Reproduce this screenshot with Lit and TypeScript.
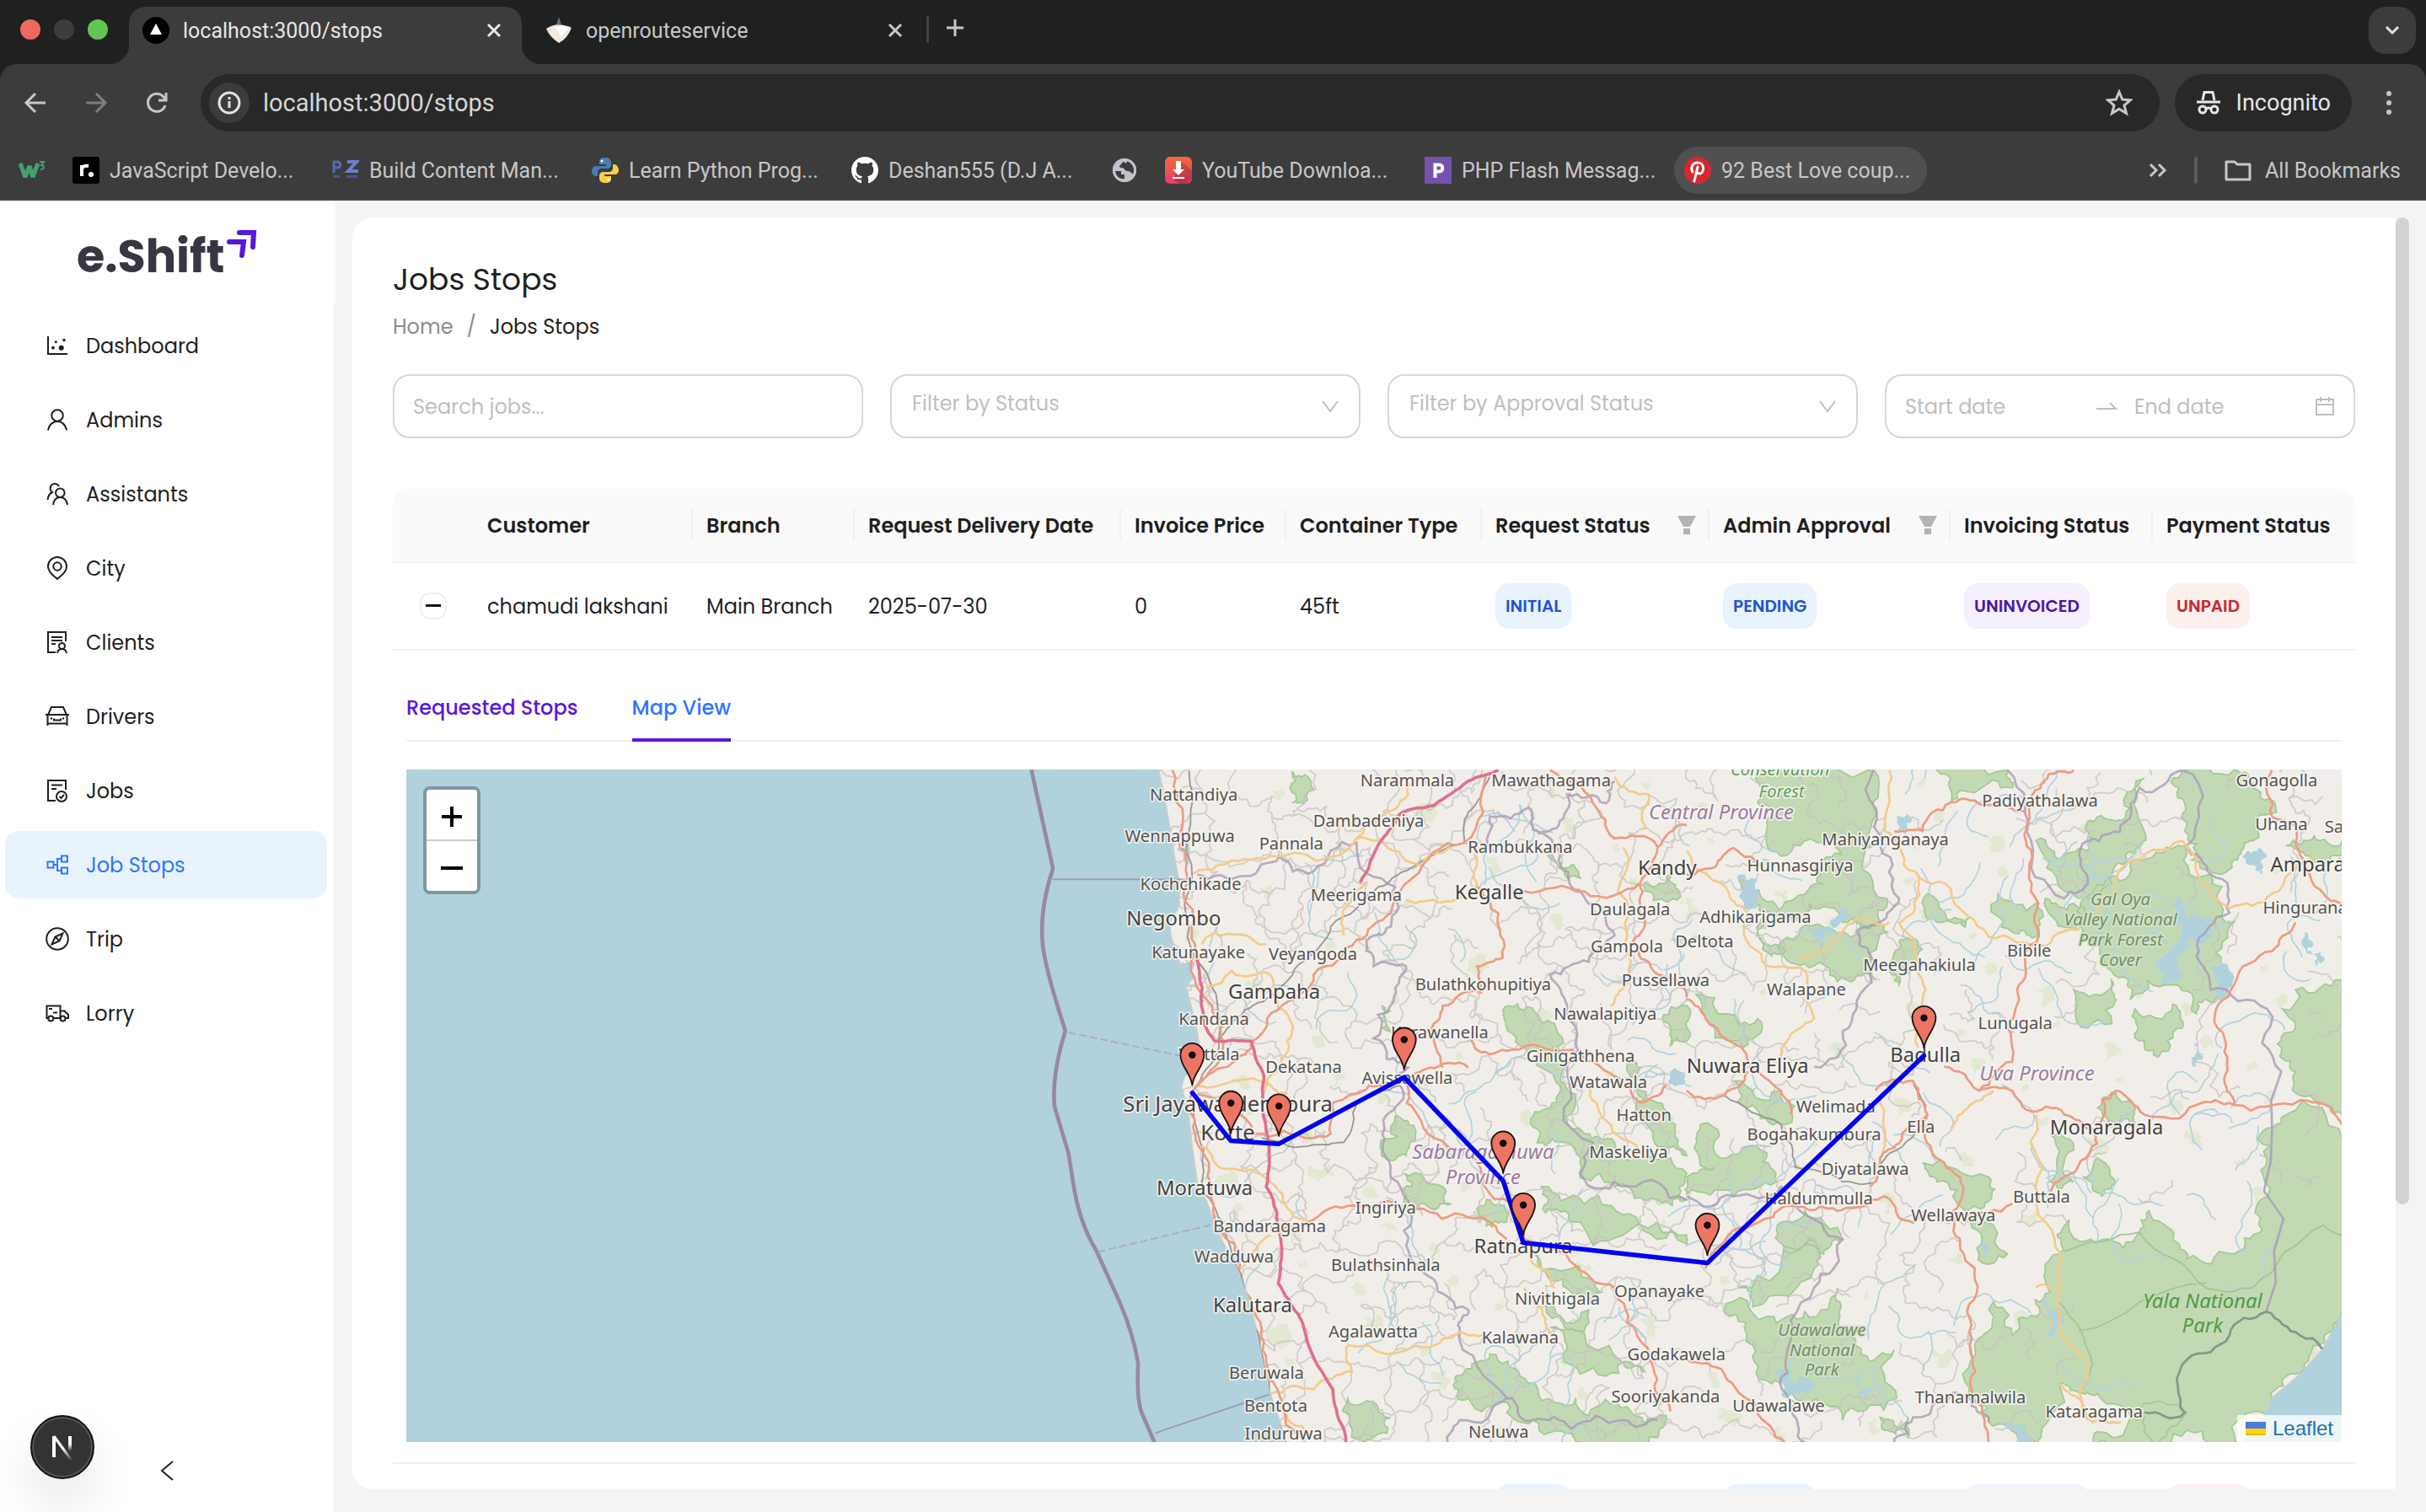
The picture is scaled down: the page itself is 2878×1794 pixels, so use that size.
import { LitElement, html, svg, css } from "lit";
import { customElement, state } from "lit/decorators.js";
import { classMap } from "lit/directives/class-map.js";

type Pt = [number, number];

/* ---------- map geometry helpers ---------- */

const west = (n: number[]): Pt[] => pairs(n).map(([x, y]) => [653.8 + x * 0.278, 490.3 + y * 0.2849] as Pt);
const east = (n: number[]): Pt[] => pairs(n).map(([x, y]) => [1089.6 + x * 0.30505, 490.3 + y * 0.3106] as Pt);

function pairs(n: number[]): Pt[] {
  const out: Pt[] = [];
  for (let i = 0; i < n.length; i += 2) out.push([n[i], n[i + 1]]);
  return out;
}

function random(seed: number) {
  let s = seed * 7919 + 17;
  return () => {
    s = (s * 16807) % 2147483647;
    return s / 2147483647;
  };
}

/* Midpoint displacement: gives straight outlines a natural, uneven edge. */
function rough(points: Pt[], amount: number, seed: number, closed = false): string {
  const rnd = random(seed + 3);
  let pts = closed ? [...points, points[0]] : points;
  for (let level = 0; level < 3; level++) {
    const next: Pt[] = [pts[0]];
    for (let i = 1; i < pts.length; i++) {
      const [ax, ay] = pts[i - 1];
      const [bx, by] = pts[i];
      const len = Math.hypot(bx - ax, by - ay) || 1;
      if (len > 2.5) {
        const d = (rnd() - 0.5) * len * amount;
        next.push([(ax + bx) / 2 - ((by - ay) / len) * d, (ay + by) / 2 + ((bx - ax) / len) * d]);
      }
      next.push(pts[i]);
    }
    pts = next;
  }
  return "M" + pts.map(([x, y]) => `${x.toFixed(1)} ${y.toFixed(1)}`).join("L") + (closed ? "Z" : "");
}

function wander(seed: number, count: number, steps: number, step: number): string {
  const rnd = random(seed);
  let d = "";
  for (let i = 0; i < count; i++) {
    let x = 750 + rnd() * 764;
    let y = 497 + rnd() * 435;
    if (x > 1370 && y > 800) continue;
    let a = rnd() * 6.28;
    d += `M${x.toFixed(1)} ${y.toFixed(1)}`;
    const n = steps / 2 + rnd() * steps;
    for (let k = 0; k < n; k++) {
      a += (rnd() - 0.5) * 1.5;
      x += Math.cos(a) * step;
      y += Math.sin(a) * step;
      d += `L${x.toFixed(1)} ${y.toFixed(1)}`;
    }
  }
  return d;
}

/* Lanes join neighbouring points of a jittered lattice, so they meet at junctions. */
function lanes(): string {
  const rnd = random(41);
  const cols = 40, rows = 23, grid: Pt[][] = [];
  for (let r = 0; r <= rows; r++) {
    grid.push([]);
    for (let c = 0; c <= cols; c++) grid[r].push([745 + c * 19.5 + (rnd() - 0.5) * 18, 495 + r * 19.5 + (rnd() - 0.5) * 18]);
  }
  let d = "";
  for (let r = 0; r < rows; r++)
    for (let c = 0; c < cols; c++) {
      const keep = c < 18 ? 0.62 : c < 26 ? 0.4 : 0.14;
      if (c > 30 && r > 14) continue;
      if (rnd() < keep) d += rough([grid[r][c], grid[r][c + 1]], 0.7, r * 50 + c);
      if (rnd() < keep) d += rough([grid[r][c], grid[r + 1][c]], 0.7, r * 60 + c + 9);
    }
  return d;
}

const coast = west([340,25,350,70,365,150,378,230,390,290,385,340,365,370,368,400,385,450,410,540,430,620,440,690,400,720,392,745,408,790,418,880,430,960,450,1000,480,1080,520,1150,552,1230,575,1330,590,1400,600,1440,620,1500,635,1568]);
const southEast = east([1160,1440,1220,1372,1240,1330,1300,1280,1350,1225,1389,1150]);
const landPath = "M" + [...coast, ...southEast, [1520, 490] as Pt, [740, 490] as Pt].map((p) => p.map((v) => v.toFixed(1)).join(" ")).join("L") + "Z";

const forests: Pt[][] = [
  west([1140,570,1210,565,1260,600,1290,690,1310,760,1330,850,1400,870,1480,900,1568,940,1568,1000,1500,1000,1400,970,1320,950,1290,870,1220,870,1215,800,1270,760,1230,700,1180,650,1150,610]),
  west([1110,1350,1180,1400,1260,1460,1340,1490,1430,1470,1520,1490,1500,1540,1440,1568,1300,1530,1210,1500,1150,1460,1060,1450,1025,1420,1050,1390]),
  west([890,810,920,830,915,900,880,910,855,880]),
  west([910,940,1000,970,1020,1010,960,1010,910,1000]),
  west([1250,1290,1420,1370,1470,1390,1380,1400,1280,1350]),
  west([780,1450,850,1470,870,1530,820,1550]),
  west([1210,1120,1350,1180,1370,1210,1280,1180]),
  west([1230,970,1330,1010,1450,1040,1568,1080,1568,1100,1420,1080,1300,1050,1240,1030]),
  west([650,30,680,35,675,100,650,100]),
  west([1470,280,1530,260,1550,300,1490,320]),
  west([1250,210,1300,240,1320,270,1290,270]),
  west([860,560,880,570,880,620,862,610]),
  west([1240,1240,1340,1250,1340,1280,1280,1280]),
  west([1080,1020,1130,1010,1150,1050,1100,1060]),
  west([1430,690,1460,700,1500,780,1540,840,1568,900,1500,880,1450,800]),
  west([1510,590,1568,560,1568,640,1530,650]),
  east([150,23,385,23,395,100,400,180,425,290,405,345,330,340,260,300,180,320,130,290,110,250,160,290,230,290,290,260,280,230,330,200,250,170,170,180,180,120,150,90]),
  east([200,380,290,350,400,340,425,360,400,460,340,460,270,430,200,400]),
  east([530,23,680,23,690,60,610,70,560,90]),
  east([1050,23,1160,23,1200,60,1250,110,1200,170,1170,200,1130,240,1070,210,1055,150,1040,80]),
  east([950,210,1040,180,1110,240,1130,300,1135,380,1150,470,1100,500,1080,530,1030,470,940,500,900,440,870,380,840,330,860,280,930,250]),
  east([740,170,800,200,850,190,850,150,870,120,930,120,950,60,970,40,970,150,930,200,900,260,830,290,780,240]),
  east([1290,480,1389,460,1389,740,1340,720,1290,650,1260,610,1290,560]),
  east([1270,180,1330,160,1389,170,1389,200,1310,200]),
  east([660,280,740,300,740,370,690,360]),
  east([760,290,820,300,840,340,810,350]),
  east([820,480,900,460,910,500,850,560]),
  east([950,520,1030,510,1050,560,1000,620,950,580]),
  east([810,960,880,1000,960,985,980,940,1030,1000,1060,1040,1160,1030,1220,980,1225,880,1210,790,1270,740,1389,790,1389,1150,1340,1220,1290,1280,1240,1330,1180,1370,1110,1425,1010,1425,970,1370,870,1320,840,1320,790,1300,740,1425,700,1425,640,1380,610,1340,610,1220,640,1190,650,1130,690,1200,740,1160,770,1110,790,1030,785,990]),
  east([80,1150,170,1160,250,1150,320,1100,325,1160,370,1240,440,1230,445,1330,380,1355,290,1340,230,1330,180,1300,140,1220]),
  east([30,760,70,830,170,820,190,880,100,910,0,905,0,870,60,850,20,800]),
  east([20,490,80,530,150,540,120,600,60,580]),
  east([450,380,490,380,490,440,450,470,430,430]),
  east([870,830,900,870,880,910,840,870]),
  east([770,780,820,800,820,880,770,880]),
  east([880,710,910,695,950,730,950,760,890,770]),
  east([500,840,640,870,640,920,590,940,530,880]),
  east([590,960,650,970,680,1030,620,1030]),
  east([190,980,250,940,330,1000,290,1030,220,1030]),
  east([110,1100,260,1000,270,1060,140,1140]),
  east([510,280,600,330,590,350,540,340]),
  east([870,1400,970,1340,1060,1360,1000,1425,860,1425]),
  east([100,670,200,690,210,760,150,730]),
  east([410,1370,470,1370,470,1410,430,1400]),
  east([160,330,180,390,210,400,180,410]),
];

const lakes: Pt[][] = [
  east([1020,330,1050,290,1060,330,1120,330,1100,380,1050,400,1010,470,1000,440,1040,380]),
  east([200,1270,230,1300,260,1290,240,1330,200,1320,190,1290]),
  east([360,1290,380,1310,415,1300,390,1330,360,1320]),
  east([670,1370,700,1380,735,1425,690,1425]),
  east([750,1120,790,1140,780,1180,760,1195]),
  east([250,350,290,350,340,310,310,350,290,390,270,370]),
  east([1080,590,1100,610,1080,640,1068,620]),
  east([1310,360,1345,400,1330,430,1315,400]),
  east([440,120,490,130,450,150]),
  east([110,240,150,290,150,310,115,270]),
  east([620,1010,645,1020,630,1040]),
  east([1190,190,1230,200,1220,240,1190,220]),
  east([1130,420,1150,440,1140,500,1125,460]),
  west([395,460,430,470,432,500,410,510]),
  west([395,180,412,200,408,240,398,230]),
  west([1540,700,1568,720,1550,740,1530,720]),
];

const trunks: Pt[][] = [
  west([372,25,390,170,410,280,400,320,425,420,465,560,490,640,430,740,425,850,460,960,480,1060,530,1150,560,1250,590,1370,620,1440,680,1568]),
  west([430,740,510,690,560,640,640,550,700,490,800,410,880,350,930,270,1050,190,1100,40]),
  west([430,760,560,850,700,860,740,850,745,780,830,740,910,730,970,700,1060,700]),
  west([910,730,950,820,1060,900,1160,1010,1190,1090,1310,1150,1400,1200,1450,1300,1490,1380,1530,1480]),
  west([600,1060,700,1045,810,1015,940,1020,1060,1040,1150,1090]),
  west([1080,290,1130,350,1140,450,1080,470,1090,530,1000,560,980,600,1000,700]),
  west([1190,300,1330,300,1460,280,1500,200,1568,150]),
  west([1250,25,1350,100,1400,180,1500,200]),
  west([1070,620,1080,660,1160,660,1300,660,1400,720,1460,780,1520,740]),
  west([1460,280,1470,360,1440,420,1490,480,1568,540]),
  east([820,23,770,30,750,60,725,100,730,190,745,300,720,400,700,480,690,630,620,690,545,640]),
  east([440,150,500,150,560,90,640,95,720,110]),
  east([0,500,40,540,130,630,200,690,220,740]),
  east([0,690,80,700,130,650]),
  east([390,890,410,830,450,800,510,740,480,670,400,690]),
  east([510,740,505,790,550,850,580,870,565,940,580,1020,615,1110,600,1220,605,1330,640,1425]),
  east([40,1060,60,1020,150,965,210,930,310,935,380,930,420,910,480,965,580,945,690,925]),
  east([620,690,690,690,720,730,800,740,860,770,870,800,800,870,770,900]),
  east([875,760,880,710,910,690,970,740,1080,720,1160,720,1300,710,1389,760]),
  east([1240,23,1240,120,1290,140,1300,200,1350,280,1389,300]),
  east([1290,340,1240,400,1160,470,1125,560,1140,660,1160,720]),
  east([0,240,60,225,100,185,160,230]),
  east([0,1250,80,1280,150,1350,210,1425]),
];

const primaries: Pt[][] = [
  west([420,260,480,240,600,220,800,180,900,210,955,240,1020,200]),
  west([800,180,850,130,920,80,930,40]),
  west([440,420,470,395,590,420]),
  west([450,520,510,480,600,490,640,580,650,620,620,700,580,760]),
  west([440,880,500,930,600,960,640,1020,690,1050]),
  west([915,320,1000,325,1070,310,1080,200,1050,190]),
  west([430,740,600,740,640,760]),
  west([600,1440,700,1430,790,1390,780,1330,960,1335,1040,1300,1110,1310]),
  west([1190,1100,1250,1170,1260,1200]),
  west([1420,200,1430,400,1420,520,1390,560]),
  west([1340,740,1380,820,1470,900]),
  west([540,1150,600,1080]),
  west([770,400,780,330,820,280]),
  west([1400,40,1480,80,1470,160]),
  west([620,1470,690,1530]),
  west([1190,1200,1240,1270,1250,1310]),
  east([430,23,420,150,460,220,560,270,640,370,760,390,850,340,930,220,1050,170,1150,310,1240,280,1330,200]),
  east([490,240,480,320,450,340,490,420,500,500,490,600]),
  east([740,740,755,850,780,1000,785,1120,850,1250,835,1310,850,1370]),
  east([120,340,170,430,250,440,270,540,210,590,200,620]),
  east([0,190,90,280,130,320]),
  east([410,700,415,820]),
  east([560,770,600,720,650,690]),
  east([740,1100,785,1105]),
  east([230,410,310,380,340,345,430,340]),
  east([790,1300,830,1330,860,1380,920,1380]),
];

const motorways: Pt[][] = [
  west([1130,25,1060,50,980,105,900,125,870,170,830,240,808,280]),
  west([430,440,445,600,470,640,555,640,585,720,580,780,597,900,590,970,615,1030,625,1100,618,1190,665,1260,685,1320,745,1430,770,1520,780,1568]),
];

const railways: Pt[][] = [
  west([410,25,418,270,400,330,440,470,490,600,480,640,430,740]),
  west([480,640,540,570,620,520,700,440,740,380,850,290,940,240,1050,190,1060,120,1110,40]),
  west([420,800,440,980,520,1150,570,1300,600,1450,640,1568]),
  west([580,860,700,875,770,870,800,780,900,740]),
  east([80,700,200,760,230,850,330,880,400,880,430,820,510,740,480,670]),
];

const boundaries: Pt[][] = [
  west([430,262,540,265,620,220,700,255,800,190,890,290,880,380,840,400,840,470,915,470,890,520,850,580,870,680,920,700,900,780,860,850,880,950,910,1070,980,1180,1060,1250,1040,1290,1150,1450,1040,1500,1020,1568]),
  west([1120,210,1110,130,1200,110,1210,160,1270,150,1290,80,1380,100,1400,50]),
  west([1210,160,1270,230,1300,290,1360,330,1400,400,1340,460,1250,490,1290,560,1290,690]),
  west([1290,690,1350,870,1320,940,1430,970,1568,1000]),
  west([1150,1450,1210,1500,1300,1520,1420,1500,1500,1500]),
  east([395,23,410,180,450,290,410,340,360,360,385,400,360,520,320,620,270,640]),
  east([680,23,730,170,800,290,850,250,850,170,930,130,960,60,1050,23]),
  east([1050,23,1060,180,1110,240,1150,320,1085,400,1110,480,1230,520,1260,650,1228,1150]),
  east([0,910,100,910,200,890,240,940,330,1000,270,1100,210,1250,230,1340,255,1425]),
  east([440,1425,480,1370,600,1330,640,1380]),
];

const places: [string, number, number, string][] = [
  ["Nattandiya", 771, 517, "town"], ["Narammala", 909, 508, "town"], ["Mawathagama", 1002, 508, "town"],
  ["Wennappuwa", 762, 544, "town"], ["Dambadeniya", 884, 534, "town"], ["Pannala", 834, 549, "town"],
  ["Rambukkana", 982, 551, "town"], ["Kochchikade", 769, 575, "town"], ["Meerigama", 876, 582, "town"],
  ["Kegalle", 962, 581, "city"], ["Kandy", 1077, 565, "city"], ["Daulagala", 1053, 591, "town"],
  ["Negombo", 758, 598, "city"], ["Katunayake", 774, 619, "town"], ["Veyangoda", 848, 620, "town"],
  ["Gampola", 1051, 615, "town"], ["Deltota", 1101, 612, "town"], ["Adhikarigama", 1134, 596, "town"],
  ["Gampaha", 823, 645, "city"], ["Bulathkohupitiya", 958, 640, "town"], ["Pussellawa", 1076, 637, "town"],
  ["Walapane", 1167, 643, "town"], ["Kandana", 784, 662, "town"], ["Nawalapitiya", 1037, 659, "town"],
  ["Wattala", 781, 685, "town"], ["Karawanella", 930, 671, "town"], ["Dekatana", 842, 693, "town"],
  ["Avissawella", 909, 700, "town"], ["Ginigathhena", 1021, 686, "town"], ["Watawala", 1039, 703, "town"],
  ["Nuwara Eliya", 1129, 693, "city"], ["Hatton", 1062, 724, "town"], ["Sri Jayawardenepura", 793, 718, "capital"],
  ["Kotte", 793, 737, "capital"], ["Maskeliya", 1052, 748, "town"], ["Moratuwa", 778, 772, "city"],
  ["Ingiriya", 895, 784, "town"], ["Bandaragama", 820, 796, "town"], ["Wadduwa", 797, 816, "town"],
  ["Bulathsinhala", 895, 821, "town"], ["Ratnapura", 984, 810, "city"], ["Nivithigala", 1006, 843, "town"],
  ["Opanayake", 1072, 838, "town"], ["Kalutara", 809, 848, "city"], ["Agalawatta", 887, 864, "town"],
  ["Kalawana", 982, 868, "town"], ["Beruwala", 818, 891, "town"], ["Godakawela", 1083, 879, "town"],
  ["Bentota", 824, 912, "town"], ["Induruwa", 829, 930, "town"], ["Sooriyakanda", 1076, 906, "town"],
  ["Neluwa", 968, 929, "town"], ["Udawalawe", 1149, 912, "town"], ["Thanamalwila", 1273, 907, "town"],
  ["Kataragama", 1353, 916, "town"], ["Mahiyanganaya", 1218, 546, "town"], ["Hunnasgiriya", 1163, 563, "town"],
  ["Padiyathalawa", 1318, 521, "town"], ["Gonagolla", 1471, 508, "town"], ["Uhana", 1474, 536, "town"],
  ["Meegahakiula", 1240, 627, "town"], ["Bibile", 1311, 618, "town"], ["Lunugala", 1302, 665, "town"],
  ["Badulla", 1244, 686, "city"], ["Welimada", 1186, 719, "town"], ["Ella", 1241, 732, "town"],
  ["Bogahakumbura", 1172, 737, "town"], ["Diyatalawa", 1205, 759, "town"], ["Haldummulla", 1175, 778, "town"],
  ["Wellawaya", 1262, 789, "town"], ["Buttala", 1319, 777, "town"], ["Monaragala", 1361, 733, "city"],
  ["Conservation", 1150, 501, "park"], ["Forest", 1151, 515, "park"],
  ["Central Province", 1112, 529, "province"], ["Sabaragamuwa", 958, 749, "province"], ["Province", 958, 765, "province"],
  ["Uva Province", 1316, 698, "province"], ["Yala National", 1423, 845, "bigpark"], ["Park", 1423, 861, "bigpark"],
  ["Gal Oya", 1370, 585, "reserve"], ["Valley National", 1370, 598, "reserve"], ["Park Forest", 1370, 611, "reserve"], ["Cover", 1370, 624, "reserve"],
  ["Udawalawe", 1177, 863, "reserve"], ["National", 1177, 876, "reserve"], ["Park", 1177, 889, "reserve"],
];

/* Labels at the right edge start here and run out of the frame. */
const edgePlaces: [string, number, number, string][] = [
  ["Sa", 1502, 538, "town"], ["Ampara", 1467, 563, "city"], ["Hingurana", 1462, 590, "town"],
];

const stops: Pt[] = [[770, 706], [795, 737], [826, 739], [907, 696], [971, 763], [984, 803], [1103, 816], [1243, 682]];

const lines = (set: Pt[][], cls: string, amount = 0.35) =>
  svg`<path class=${cls} d=${set.map((p, i) => rough(p, amount, i * 13 + 5)).join("")}></path>`;

@customElement("stops-map")
export class StopsMap extends LitElement {
  static styles = css`
    :host { display: block; position: relative; overflow: hidden; background: #b1d1dc; }
    svg { display: block; }
    .canvas { width: 100%; height: auto; }
    .land { fill: #f1eee9; stroke: #c9cfcd; stroke-width: 1; }
    .forest { fill: #c3d9b4; stroke: #a5c998; stroke-width: 1; }
    .scrub { fill: #dce6c8; opacity: 0.7; }
    .lake { fill: #b1d1dc; }
    .stream { fill: none; stroke: #b4d3df; stroke-width: 1; }
    .lane { fill: none; stroke: #c6c2bf; stroke-width: 1; opacity: 0.75; }
    .rail { fill: none; stroke: #9a9694; stroke-width: 1; }
    .trunk { fill: none; stroke: #ee9c82; stroke-width: 1.5; stroke-linejoin: round; }
    .primary { fill: none; stroke: #f3cb8b; stroke-width: 1.5; stroke-linejoin: round; }
    .motorway { fill: none; stroke: #e0708c; stroke-width: 2; stroke-linejoin: round; }
    .boundary { fill: none; stroke: #a99bb4; stroke-width: 1.5; opacity: 0.8; }
    .coastline { fill: none; stroke: #9688a5; stroke-width: 2.5; stroke-linejoin: round; }
    .sea-line { fill: none; stroke: #9c99b5; stroke-width: 1; }
    .dashed { stroke-dasharray: 5 2; stroke: #a9abc0; }
    .park-line { fill: none; stroke: #9ec793; stroke-width: 1; }
    .park-edge { fill: none; stroke: #83998a; stroke-width: 1.5; }
    text { font-family: "Noto Sans", sans-serif; text-anchor: middle; paint-order: stroke; stroke: rgba(247, 245, 241, 0.85); stroke-width: 2px; stroke-linejoin: round; }
    .town { font-size: 11px; fill: #545454; }
    .city { font-size: 13px; fill: #434343; }
    .capital { font-size: 14px; fill: #434343; }
    .edge { text-anchor: start; }
    .province { font-size: 13px; font-style: italic; fill: #9a7ca4; }
    .park { font-size: 11px; font-style: italic; fill: #5f9f55; }
    .bigpark { font-size: 13px; font-style: italic; fill: #4f9a45; stroke: rgba(195, 217, 180, 0.9); }
    .reserve { font-size: 11px; font-style: italic; fill: #6f8f6c; stroke: rgba(215, 227, 200, 0.9); }
    .route { fill: none; stroke: #0300f2; stroke-width: 3; stroke-linecap: round; stroke-linejoin: round; }
    .pin { fill: #ec7564; stroke: #1d1413; stroke-width: 1; stroke-linejoin: round; }
    .pin-dot { fill: #120b0b; }
    .zoom { position: absolute; left: 20px; top: 20px; display: flex; flex-direction: column; border: 4px solid rgba(0, 0, 0, 0.28); border-radius: 8px; background-clip: padding-box; }
    .zoom button { width: 60px; height: 59px; border: 0; padding: 4px 0 0; background: #fff; color: #000; display: grid; place-items: center; }
    .zoom button:first-child { border-bottom: 2px solid #ccc; border-radius: 4px 4px 0 0; height: 61px; }
    .zoom button:last-child { border-radius: 0 0 4px 4px; }
    .credit { position: absolute; right: 0; bottom: 0; display: flex; align-items: center; gap: 8px; height: 32px; padding: 0 10px; background: rgba(255, 255, 255, 0.8); font: 24px/32px "Liberation Sans", Arial, sans-serif; color: #1b75ab; text-decoration: none; }
  `;

  render() {
    return html`
      <svg class="canvas" viewBox="262 497 1251 435" role="img" aria-label="Map of the requested stops">
        <defs><clipPath id="land"><path d=${landPath}></path></clipPath></defs>
        <path class="land" d=${landPath}></path>
        <g clip-path="url(#land)">
          <path class="scrub" d=${Array.from({ length: 160 }, (_, i) => {
            const r = random(i + 200);
            r();
            const x = 760 + r() * 750, y = 500 + r() * 430, w = 3 + r() * 8;
            return rough([[x, y], [x + w, y - 2], [x + w * 1.3, y + w * 0.6], [x + w * 0.4, y + w]], 0.8, i, true);
          }).join("")}></path>
          <path class="forest" d=${forests.map((p, i) => rough(p, 0.7, i + 1, true)).join("")}></path>
          <path class="stream" d=${wander(11, 150, 12, 4)}></path>
          <path class="lane" d=${lanes()}></path>
          <path class="lake" d=${lakes.map((p, i) => rough(p, 0.9, i + 70, true)).join("")}></path>
          ${lines([east([800, 1025, 960, 985, 1100, 1100, 1200, 1100, 1350, 970, 1389, 990]), east([830, 1190, 1100, 1090]), east([790, 1130, 860, 1260, 840, 1310])], "park-line", 0.2)}
          ${lines(boundaries, "boundary", 0.5)}
          ${lines([east([1389, 1250, 1300, 1200, 1228, 1150, 1150, 1200, 1060, 1250, 1055, 1360, 970, 1360])], "park-edge")}
          ${lines(railways, "rail", 0.2)}
          ${lines(primaries, "primary")}
          ${lines(trunks, "trunk")}
          ${lines(motorways, "motorway", 0.12)}
        </g>
        <path class="coastline" d="M666 497L680 561Q669 594 675 620Q678 635 688 666Q679 695 681 715Q687 735 690 745L693 764Q697 790 708 808Q717 828 723 841Q732 862 735 881Q734 903 737 912L746 933"></path>
        <path class="sea-line" d="M680 568H770M746 926L820 901"></path>
        <path class="sea-line dashed" d="M690 667L762 682M709 809L784 791"></path>
        ${places.map(([name, x, y, kind]) => svg`<text class=${kind} x=${x} y=${y}>${name}</text>`)}
        ${edgePlaces.map(([name, x, y, kind]) => svg`<text class="${kind} edge" x=${x} y=${y}>${name}</text>`)}
        <polyline class="route" points=${stops.map((p) => p.join(",")).join(" ")}></polyline>
        ${stops.map(([x, y]) => svg`
          <g transform="translate(${x} ${y - 5})">
            <path class="pin" d="M0 0C-1 -8 -7.6 -12 -7.6 -19.4A7.6 7.6 0 0 1 7.6 -19.4C7.6 -12 1 -8 0 0Z"></path>
            <circle class="pin-dot" cx="0" cy="-19.400" r="2.300"></circle>
          </g>`)}
      </svg>
      <div class="zoom">
        <button aria-label="Zoom in"><svg width="28" height="28" viewBox="0 0 28 28"><path d="M14 2V26M2 14H26" stroke="#000" stroke-width="4"></path></svg></button>
        <button aria-label="Zoom out"><svg width="28" height="28" viewBox="0 0 28 28"><path d="M1 14H27" stroke="#000" stroke-width="4"></path></svg></button>
      </div>
      <a class="credit" href="#leaflet"><svg width="24" height="16" viewBox="0 0 24 16"><path fill="#4c7be1" d="M0 0h24v8H0z"></path><path fill="#ffd500" d="M0 8h24v6H0z"></path><path fill="#e0bc00" d="M0 14h24v2H0z"></path></svg>Leaflet</a>
    `;
  }
}

/* ---------- browser chrome ---------- */

const favicons: Record<string, unknown> = {
  w3: svg`<path d="M2 8L8 24L13 11L17 24L23 8" fill="none" stroke="#45a070" stroke-width="5" stroke-linejoin="bevel"></path><path d="M25 6h5l-3 4c4 0 4 5-1 5" fill="none" stroke="#45a070" stroke-width="2"></path>`,
  roadmap: svg`<rect width="32" height="32" rx="3" fill="#000"></rect><path d="M11 23V10M11 15c1-4 3-5 8-4" fill="none" stroke="#fff" stroke-width="4"></path><circle cx="22" cy="21" r="3" fill="#fff"></circle>`,
  pz: svg`<path d="M2 19V6h4c5 0 5 7 0 7H3" fill="none" stroke="#5a68b4" stroke-width="3"></path><path d="M18 6h11L19 17h12" fill="none" stroke="#6f7ed0" stroke-width="4"></path><path d="M1 22h8v3H1zM17 22h13v3H17z" fill="#4d568a"></path>`,
  python: svg`<path d="M16 1c-6 0-7 2-7 5v3h8v2H5c-3 0-5 3-5 6s2 6 5 6h2v-4c0-3 2-5 5-5h7c2 0 4-2 4-4V6c0-3-3-5-7-5z" fill="#4a7dae"></path><path d="M16 31c6 0 7-2 7-5v-3h-8v-2h12c3 0 5-2 5-5s-2-7-5-7h-2v4c0 3-2 5-5 5h-7c-2 0-4 2-4 4v4c0 3 3 5 7 5z" fill="#f7ce46"></path><circle cx="12" cy="5" r="1.500" fill="#fff"></circle><circle cx="20" cy="27" r="1.500" fill="#fff"></circle>`,
  github: svg`<path fill="#fff" transform="scale(2)" d="M8 0C3.58 0 0 3.58 0 8c0 3.54 2.29 6.53 5.47 7.59.4.07.55-.17.55-.38 0-.19-.01-.82-.01-1.49-2.01.37-2.53-.49-2.69-.94-.09-.23-.48-.94-.82-1.13-.28-.15-.68-.52-.01-.53.63-.01 1.08.58 1.23.82.72 1.21 1.87.87 2.33.66.07-.52.28-.87.51-1.07-1.78-.2-3.64-.89-3.64-3.95 0-.87.31-1.59.82-2.15-.08-.2-.36-1.02.08-2.12 0 0 .67-.21 2.2.82.64-.18 1.32-.27 2-.27s1.36.09 2 .27c1.53-1.04 2.2-.82 2.2-.82.44 1.1.16 1.92.08 2.12.51.56.82 1.27.82 2.15 0 3.07-1.87 3.75-3.65 3.95.29.25.54.73.54 1.48 0 1.07-.01 1.93-.01 2.2 0 .21.15.46.55.38A8.01 8.01 0 0 0 16 8c0-4.42-3.58-8-8-8z"></path>`,
  globe: svg`<circle cx="16" cy="16" r="14" fill="#bfc3ca"></circle><path d="M5 17h7v4h4v5c-6 1-11-3-11-9zM15 6c-3 1-2 3-4 4s-1 3 2 3 3 4 7 4 4 4 7 3c2-6-2-14-8-15l-1 3z" fill="#3c3c3c"></path><circle cx="16" cy="16" r="12.500" fill="none" stroke="#bfc3ca" stroke-width="3"></circle>`,
  download: svg`<defs><linearGradient id="dl" x2="0" y2="1"><stop stop-color="#ee6a3d"></stop><stop offset="1" stop-color="#e83b68"></stop></linearGradient></defs><rect width="32" height="32" rx="6" fill="url(#dl)"></rect><path d="M20 6l12 10v10l-6 6H17l-7-6z" fill="#000" opacity=".18"></path><path d="M13 5h6v10h4l-7 7-7-7h4zM9 24h14v2H9z" fill="#fff"></path>`,
  php: svg`<rect width="32" height="32" fill="#7452ad"></rect><path d="M12.500 25V9.500h5c5 0 5 8 0 8h-4" fill="none" stroke="#fff" stroke-width="4"></path>`,
  pinterest: svg`<circle cx="16" cy="16" r="16" fill="#d8282f"></circle><path d="M10 18c-3-5 0-11 6-11 9 0 8 13 2 13-2 0-3-1-3-2M16 12l-4 17" fill="none" stroke="#fff" stroke-width="3" stroke-linecap="round"></path>`,
};

const bookmarks: [string, string][] = [
  ["w3", ""], ["roadmap", "JavaScript Develo..."], ["pz", "Build Content Man..."], ["python", "Learn Python Prog..."],
  ["github", "Deshan555 (D.J A..."], ["globe", ""], ["download", "YouTube Downloa..."], ["php", "PHP Flash Messag..."], ["pinterest", "92 Best Love coup..."],
];

@customElement("browser-chrome")
export class BrowserChrome extends LitElement {
  static styles = css`
    :host { display: block; flex: none; background: #1f2120; color: #c7c7c7; font-family: "SF Pro Text", Roboto, sans-serif; }
    button, input { font: inherit; color: inherit; border: 0; background: none; padding: 0; }
    a { color: inherit; text-decoration: none; }
    svg { display: block; flex: none; }
    .strip { display: flex; height: 68px; padding: 8px 12px 0 24px; align-items: flex-start; }
    .lights { display: flex; gap: 16px; padding-top: 15px; }
    .light { width: 24px; height: 24px; border-radius: 50%; background: #3d3d3d; }
    .close { background: #ed6a5e; }
    .full { background: #61c554; }
    .tab { display: flex; align-items: center; position: relative; height: 68px; padding: 0 24px 12px 16px; box-sizing: border-box; font-size: 25px; }
    .tab .x { margin-left: auto; }
    .title { margin-left: 16px; }
    .active { width: 466px; margin-left: 25px; background: #3c3c3c; border-radius: 20px 20px 0 0; color: #e6e6e6; }
    .active::before, .active::after { content: ""; position: absolute; bottom: 0; width: 24px; height: 24px; }
    .active::before { right: 100%; background: radial-gradient(circle at 0 0, transparent 24px, #3c3c3c 25px); }
    .active::after { left: 100%; background: radial-gradient(circle at 100% 0, transparent 24px, #3c3c3c 25px); }
    .idle { width: 480px; padding: 0 28px 12px; }
    .rule { width: 3px; height: 32px; margin-top: 11px; background: #434443; }
    .plus { margin: 14px 0 0 20px; }
    .more { margin-left: auto; width: 56px; height: 56px; border-radius: 20px; background: #3c3c3c; display: grid; place-items: center; }
    .bar { display: flex; align-items: center; height: 84px; padding: 8px 30px 0 28px; box-sizing: border-box; background: #3c3c3c; border-radius: 20px 20px 0 0; }
    .nav { display: flex; gap: 44px; margin-right: 38px; }
    .omnibox { flex: 1; display: flex; align-items: center; height: 68px; border-radius: 34px; background: #282828; padding: 0 32px 0 10px; }
    .info { width: 48px; height: 48px; border-radius: 50%; background: #3c3c3c; display: grid; place-items: center; margin-right: 16px; }
    .address { flex: 1; font-size: 29px; color: #d6d6d6; outline: 0; }
    .incognito { display: flex; align-items: center; gap: 18px; height: 68px; padding: 0 25px; margin: 0 30px 0 18px; border-radius: 34px; background: #282828; color: #e6e6e6; font-size: 27px; }
    .bookmarks { display: flex; align-items: center; gap: 8px; height: 78px; padding: 8px 30px 0 10px; box-sizing: border-box; background: #3c3c3c; border-bottom: 2px solid #474747; font-size: 25px; }
    .bookmark { display: flex; align-items: center; gap: 12px; width: 300px; height: 56px; padding: 0 12px; box-sizing: border-box; border-radius: 28px; white-space: nowrap; }
    .bare { width: 56px; }
    .hover { background: #505050; }
    .overflow { margin-left: auto; }
    .divider { width: 4px; height: 32px; background: #5b5b5b; margin: 0 24px; border-radius: 2px; }
    .all { display: flex; align-items: center; gap: 16px; }
  `;

  private cross() {
    return svg`<path d="M2 2L16 16M16 2L2 16" stroke="currentColor" stroke-width="3" fill="none"></path>`;
  }

  render() {
    return html`
      <div class="strip">
        <div class="lights"><span class="light close"></span><span class="light"></span><span class="light full"></span></div>
        <div class="tab active">
          <svg width="32" height="32" viewBox="0 0 32 32"><circle cx="16" cy="16" r="16" fill="#000"></circle><path d="M16 8L23 21H9z" fill="#fff"></path></svg>
          <span class="title">localhost:3000/stops</span>
          <button class="x" aria-label="Close tab"><svg width="18" height="18">${this.cross()}</svg></button>
        </div>
        <div class="tab idle">
          <svg width="32" height="32" viewBox="0 0 32 32"><path d="M13 9l3-9 3 9z" fill="#6c6a78"></path><path d="M1 14Q14 5 31 13Q26 26 16 31Q5 24 1 14z" fill="#efe9df"></path><path d="M12 13l8-3 7 4-8 9z" fill="#fff"></path></svg>
          <span class="title">openrouteservice</span>
          <button class="x" aria-label="Close tab"><svg width="18" height="18">${this.cross()}</svg></button>
        </div>
        <span class="rule"></span>
        <button class="plus" aria-label="New tab"><svg width="22" height="24"><path d="M11 1V21M1 11H21" stroke="#c7c7c7" stroke-width="3"></path></svg></button>
        <button class="more" aria-label="Search tabs"><svg width="18" height="12"><path d="M2 2L9 9L16 2" fill="none" stroke="#e3e3e3" stroke-width="3"></path></svg></button>
      </div>
      <div class="bar">
        <div class="nav">
          <button aria-label="Back"><svg width="28" height="28"><path d="M26 14H3M14 3L3 14L14 25" fill="none" stroke="#c7c7c7" stroke-width="3"></path></svg></button>
          <button aria-label="Forward"><svg width="28" height="28"><path d="M2 14H25M14 3L25 14L14 25" fill="none" stroke="#7d7d7d" stroke-width="3"></path></svg></button>
          <button aria-label="Reload"><svg width="28" height="28"><path d="M24 17A10.500 10.500 0 1 1 22 7L25 10M25 2V11H16" fill="none" stroke="#c7c7c7" stroke-width="3"></path></svg></button>
        </div>
        <div class="omnibox">
          <span class="info"><svg width="28" height="28"><circle cx="14" cy="14" r="12" fill="none" stroke="#e3e3e3" stroke-width="3"></circle><path d="M14 12V20M14 7V10" stroke="#e3e3e3" stroke-width="3"></path></svg></span>
          <input class="address" aria-label="Address" value="localhost:3000/stops" />
          <button aria-label="Bookmark this page"><svg width="32" height="32" viewBox="0 0 32 32"><path d="M16 3L19.800 12L29.500 12.700L22 19L24.500 28.500L16 23.300L7.500 28.500L10 19L2.500 12.700L12.200 12z" fill="none" stroke="#c7c7c7" stroke-width="3"></path></svg></button>
        </div>
        <div class="incognito">
          <svg width="30" height="30" viewBox="0 0 30 30"><path d="M8 12L10 2.500H20L22 12M1 14H29" fill="none" stroke="#e6e6e6" stroke-width="3"></path><circle cx="8" cy="23" r="4" fill="none" stroke="#e6e6e6" stroke-width="3"></circle><circle cx="22" cy="23" r="4" fill="none" stroke="#e6e6e6" stroke-width="3"></circle><path d="M12 22Q15 20 18 22" fill="none" stroke="#e6e6e6" stroke-width="3"></path></svg>
          <span>Incognito</span>
        </div>
        <button aria-label="Menu"><svg width="28" height="28"><circle cx="14" cy="3" r="3" fill="#c7c7c7"></circle><circle cx="14" cy="14" r="3" fill="#c7c7c7"></circle><circle cx="14" cy="25" r="3" fill="#c7c7c7"></circle></svg></button>
      </div>
      <div class="bookmarks">
        ${bookmarks.map(([icon, label]) => html`
          <a href="#bookmark" aria-label=${label || icon} class=${classMap({ bookmark: true, bare: !label, hover: icon === "pinterest" })}>
            <svg width="32" height="32" viewBox="0 0 32 32">${favicons[icon]}</svg>${label}
          </a>`)}
        <button class="overflow" aria-label="More bookmarks"><svg width="22" height="18"><path d="M2 2L9 9L2 16M12 2L19 9L12 16" fill="none" stroke="#c7c7c7" stroke-width="3"></path></svg></button>
        <span class="divider"></span>
        <a class="all" href="#bookmarks"><svg width="32" height="26"><path d="M2 3H12L15 6H30V24H2z" fill="none" stroke="#c7c7c7" stroke-width="3" stroke-linejoin="round"></path></svg>All Bookmarks</a>
      </div>
    `;
  }
}

/* ---------- sidebar ---------- */

const menu: [string, unknown][] = [
  ["Dashboard", svg`<path d="M3 3V24H26"></path><g fill="currentColor" stroke="none"><circle cx="12.300" cy="9.700" r="1.500"></circle><circle cx="22" cy="7.500" r="1.700"></circle><circle cx="9" cy="16.700" r="1.900"></circle><circle cx="18.700" cy="16.700" r="3"></circle></g>`],
  ["Admins", svg`<circle cx="14" cy="9" r="6.800"></circle><path d="M3 26.500C4 19.500 9 16 14 16S24 19.500 25 26.500"></path>`],
  ["Assistants", svg`<circle cx="17.300" cy="12.700" r="5.300"></circle><path d="M9 27C10 21 13 18 17.300 18S25 21 26 27M16 5A5.500 5.500 0 1 0 8 12C5 13.500 3 16.500 2.500 21"></path>`],
  ["City", svg`<path d="M14 27C11 24 3 20 3 12A11 11 0 0 1 25 12C25 20 17 24 14 27z"></path><circle cx="14" cy="12" r="4.700"></circle>`],
  ["Clients", svg`<path d="M24 13V2H3V26H12M7 8H20M7 12H20M7 16H12"></path><circle cx="19.500" cy="18.500" r="3.500"></circle><path d="M14 27C14.500 24 16.500 22 19.500 22S24.500 24 25 27"></path>`],
  ["Drivers", svg`<path d="M3 12L7 3H21L25 12M0 12H28M2.500 12V25M25.500 12V25M2.500 22.500H25.500M6 16L8 17M22 16L20 17M10 16.500V18.500H18V16.500"></path>`],
  ["Jobs", svg`<path d="M24 13V2H3V26H12M7 7.500H20M7 12H13"></path><circle cx="19" cy="21" r="6"></circle><path d="M16.500 21L18.500 23L22 19"></path>`],
  ["Job Stops", svg`<path d="M2.500 10.500H9.500V17.500H2.500zM19 3.500H26V10.500H19zM19 17.500H26V24.500H19zM9.500 14H14M19 7H14V21H19"></path>`],
  ["Trip", svg`<circle cx="14" cy="14" r="12.800"></circle><path d="M20.500 7.500L11.500 11.500L7.500 20.500L16.500 16.500zM11.500 11.500L16.500 16.500"></path>`],
  ["Lorry", svg`<path d="M3 20H1.500V5.500H17.500V20H9.500M17.500 11.500H22.500L27 16V20H24M4 9H8M9 13.500H14"></path><circle cx="6.300" cy="20.500" r="3"></circle><circle cx="20.500" cy="20.500" r="3"></circle>`],
];

@customElement("side-menu")
export class SideMenu extends LitElement {
  static styles = css`
    :host { display: flex; flex-direction: column; flex: none; width: 398px; position: relative; background: #fff; color: #1f1f1f; font-family: Poppins, Inter, sans-serif; }
    svg { display: block; flex: none; }
    .logo { display: flex; height: 124px; padding: 24px 0 0 91px; box-sizing: border-box; font-size: 54px; line-height: 84px; font-weight: 700; color: #383642; }
    .mark { margin: 9px 0 0 3px; }
    nav { flex: 1; display: flex; flex-direction: column; gap: 8px; padding: 8px 8px 0 6px; border-right: 2px solid #f0f0f0; }
    .item { display: flex; align-items: center; gap: 20px; height: 80px; padding-left: 48px; border-radius: 16px; color: inherit; text-decoration: none; font-size: 24px; }
    .item svg { fill: none; stroke: currentColor; stroke-width: 2; }
    .selected { background: #e8f3fe; color: #3276fb; }
    .collapse { position: absolute; left: 184px; bottom: 32px; border: 0; background: none; padding: 4px; }
    .badge { position: absolute; left: 36px; bottom: 39px; width: 76px; height: 76px; box-sizing: border-box; border: 2px solid #141414; border-radius: 50%; padding: 0; background: #333; display: grid; place-items: center; box-shadow: inset 0 0 0 2px #555, 0 32px 60px rgba(0, 0, 0, 0.1); }
  `;

  render() {
    return html`
      <div class="logo">e.Shift<svg class="mark" width="36" height="36" viewBox="0 0 36 36"><path d="M15 5H32L31 22M3 16H20L18 32" fill="none" stroke="#5a17da" stroke-width="6" stroke-linecap="round"></path></svg></div>
      <nav>
        ${menu.map(([label, icon]) => html`
          <a href="#menu" class=${classMap({ item: true, selected: label === "Job Stops" })}>
            <svg width="28" height="28" viewBox="0 0 28 28">${icon}</svg>${label}
          </a>`)}
      </nav>
      <button class="badge" aria-label="Developer tools"><svg width="28" height="34" viewBox="0 0 28 34"><defs><linearGradient id="fade" x1="0" y1="0" x2="0" y2="1"><stop offset=".5" stop-color="#fff"></stop><stop offset="1" stop-color="#fff" stop-opacity="0"></stop></linearGradient></defs><path d="M4 4L25 33" fill="none" stroke="url(#fade)" stroke-width="3"></path><path d="M4 4V29" stroke="#fff" stroke-width="4"></path><path d="M21 4h4v18h-4z" fill="url(#fade)"></path></svg></button>
      <button class="collapse" aria-label="Collapse menu"><svg width="20" height="26"><path d="M17 2L4 13L17 24" fill="none" stroke="#1f1f1f" stroke-width="2"></path></svg></button>
    `;
  }
}

/* ---------- page ---------- */

const columns: { label: string; width: number; filter?: boolean }[] = [
  { label: "Customer", width: 260 }, { label: "Branch", width: 192 }, { label: "Request Delivery Date", width: 316 },
  { label: "Invoice Price", width: 196 }, { label: "Container Type", width: 232 }, { label: "Request Status", width: 270, filter: true },
  { label: "Admin Approval", width: 286, filter: true }, { label: "Invoicing Status", width: 240 }, { label: "Payment Status", width: 240 },
];

const cells = ["chamudi lakshani", "Main Branch", "2025-07-30", "0", "45ft"];
const tags: [string, string][] = [["INITIAL", "blue"], ["PENDING", "blue"], ["UNINVOICED", "purple"], ["UNPAID", "red"]];

@customElement("app-root")
export class AppRoot extends LitElement {
  static styles = css`
    :host { display: flex; flex-direction: column; height: 100vh; overflow: hidden; color: #1f1f1f; font-family: Poppins, Inter, sans-serif; font-size: 24px; }
    a { color: inherit; text-decoration: none; }
    button, input, select { font: inherit; color: inherit; border: 0; background: none; padding: 0; outline: 0; min-width: 0; }
    svg { display: block; flex: none; }
    .body { flex: 1; display: flex; min-height: 0; background: #f4f4f4; }
    main { flex: 1; display: flex; min-width: 0; margin: 20px 20px 27px; border-radius: 24px 0 0 24px; overflow: hidden; }
    .sheet { flex: 1; min-width: 0; background: #fff; padding: 50px 48px 0; overflow: hidden; }
    .track { width: 16px; }
    .thumb { height: 77.6%; border-radius: 8px; background: #d2d2d2; }
    h1 { margin: 0; font-size: 36px; line-height: 48px; font-weight: 400; }
    .crumbs { display: flex; gap: 16px; margin-top: 12px; line-height: 40px; color: #8c8c8c; }
    .here { color: #1f1f1f; }
    .filters { display: grid; grid-template-columns: repeat(4, 1fr); gap: 32px; margin-top: 36px; }
    .field { display: flex; align-items: center; height: 76px; box-sizing: border-box; border: 2px solid #d6d6d6; border-radius: 20px; padding: 0 22px; color: #bfbfbf; position: relative; }
    .field input { flex: 1; width: 0; }
    ::placeholder { color: #bfbfbf; opacity: 1; }
    .field select { flex: 1; appearance: none; height: 72px; padding: 0 0 8px 2px; }
    .field svg { stroke: #bfbfbf; fill: none; stroke-width: 2; pointer-events: none; }
    .field .swap { margin: 0 20px; }
    .calendar { margin-left: 8px; }
    table { width: 100%; margin-top: 60px; table-layout: fixed; border-collapse: separate; border-spacing: 0; }
    th { position: relative; height: 88px; box-sizing: border-box; padding: 0 16px; text-align: left; font-weight: 600; white-space: nowrap; background: #fafafa; border-bottom: 2px solid #f0f0f0; }
    th:first-child { border-radius: 20px 0 0 0; }
    th:last-child { border-radius: 0 20px 0 0; }
    th + th:not(:last-child)::after { content: ""; position: absolute; right: 0; top: 24px; width: 2px; height: 38px; background: #f0f0f0; }
    .head { display: flex; align-items: center; justify-content: space-between; }
    td { height: 104px; box-sizing: border-box; padding: 0 16px; border-bottom: 2px solid #f0f0f0; white-space: nowrap; }
    .toggle { display: grid; place-items: center; width: 32px; height: 32px; margin: 0 auto; box-sizing: border-box; border: 2px solid #efefef; border-radius: 12px; }
    .tag { display: inline-block; vertical-align: middle; height: 54px; line-height: 54px; padding: 0 12px; border-radius: 16px; font-size: 20px; font-weight: 600; }
    .blue { background: #e8f3fe; color: #2354d2; }
    .purple { background: #f5effe; color: #4b17a8; }
    .red { background: #fcf0ef; color: #c42a2d; }
    .detail { height: auto; padding: 28px 16px 24px; }
    .tabs { display: flex; gap: 64px; height: 80px; box-sizing: border-box; border-bottom: 2px solid #f0f0f0; margin-bottom: 33px; font-weight: 500; }
    .tabs button { height: 80px; border-bottom: 4px solid transparent; color: #5a17da; padding-top: 2px; box-sizing: border-box; }
    .tabs .current { color: #2f74ff; border-color: #5a17da; }
    .next td { vertical-align: top; padding-top: 24px; border: 0; }
    .next .tag { vertical-align: top; box-sizing: border-box; }
    .w1 { width: 90px; } .w2 { width: 111px; } .w3 { width: 148px; } .w4 { width: 100px; }
  `;

  @state() private tab = "Map View";

  private select(label: string) {
    return html`<div class="field">
      <select aria-label=${label}><option>${label}</option></select>
      <svg width="24" height="20"><path d="M3 4L12 16L21 4"></path></svg>
    </div>`;
  }

  render() {
    return html`
      <browser-chrome></browser-chrome>
      <div class="body">
        <side-menu></side-menu>
        <main>
          <div class="sheet">
            <h1>Jobs Stops</h1>
            <div class="crumbs"><a href="#home">Home</a><span>/</span><span class="here">Jobs Stops</span></div>
            <div class="filters">
              <div class="field"><input aria-label="Search jobs" placeholder="Search jobs..." /></div>
              ${this.select("Filter by Status")}
              ${this.select("Filter by Approval Status")}
              <div class="field">
                <input aria-label="Start date" placeholder="Start date" />
                <svg class="swap" width="26" height="20"><path d="M1 13H24L17 6"></path></svg>
                <input aria-label="End date" placeholder="End date" />
                <svg class="calendar" width="24" height="24"><path d="M2 4H22V22H2zM2 10H22M7 1V7M17 1V7"></path></svg>
              </div>
            </div>
            <table>
              <colgroup>
                <col style="width:96px" />
                ${columns.map((c) => html`<col style="width:${c.width}px" />`)}
              </colgroup>
              <thead>
                <tr>
                  <th></th>
                  ${columns.map((c) => html`<th scope="col"><div class="head">${c.label}${c.filter
                    ? html`<svg width="22" height="22"><path fill="#b3b3b3" d="M0 0H22L15 13H7zM7 15H15V22H7z"></path></svg>` : ""}</div></th>`)}
                </tr>
              </thead>
              <tbody>
                <tr>
                  <td><button class="toggle" aria-label="Collapse row"><svg width="20" height="4"><path d="M1 0H19V3H1z" fill="#141414"></path></svg></button></td>
                  ${cells.map((c) => html`<td>${c}</td>`)}
                  ${tags.map(([label, tone]) => html`<td><span class="tag ${tone}">${label}</span></td>`)}
                </tr>
                <tr>
                  <td class="detail" colspan="10">
                    <div class="tabs" role="tablist">
                      ${["Requested Stops", "Map View"].map((t) => html`
                        <button role="tab" aria-selected=${t === this.tab} class=${classMap({ current: t === this.tab })} @click=${() => (this.tab = t)}>${t}</button>`)}
                    </div>
                    <stops-map></stops-map>
                  </td>
                </tr>
                <tr class="next">
                  <td colspan="6"></td>
                  ${tags.map(([, tone], i) => html`<td><span class="tag ${tone} w${i + 1}"></span></td>`)}
                </tr>
              </tbody>
            </table>
          </div>
          <div class="track"><div class="thumb"></div></div>
        </main>
      </div>
    `;
  }
}
